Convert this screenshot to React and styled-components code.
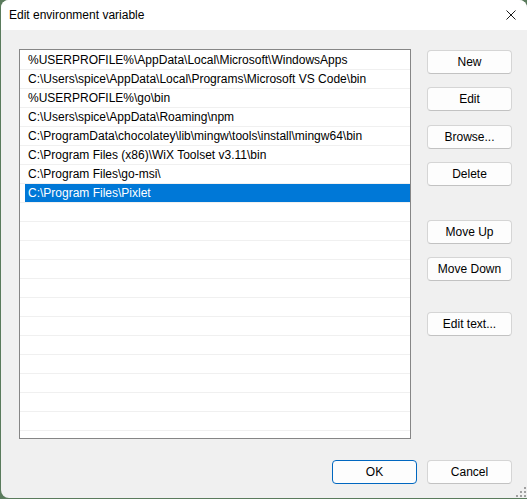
import styled, { createGlobalStyle } from 'styled-components';

const GlobalStyle = createGlobalStyle`
  html, body {
    margin: 0;
    padding: 0;
    background: #5a7b5c;
  }

  body {
    font-family: 'Liberation Sans', Arial, sans-serif;
    font-size: 12px;
    color: #000;
  }
`;

const Window = styled.div`
  position: relative;
  margin-left: 1px;
  width: 526px;
  height: 498px;
  display: flex;
  flex-direction: column;
  background: #f0f0f0;
  border-radius: 8px 8px 0 8px;
  overflow: hidden;
`;

const TitleBar = styled.div`
  height: 30px;
  flex: 0 0 30px;
  display: flex;
  align-items: center;
  justify-content: space-between;
  background: #ffffff;
  padding: 0 11px 0 8px;
  box-sizing: border-box;
`;

const Title = styled.span`
  font-size: 12px;
  margin-top: -1px;
`;

const CloseIcon = styled.svg`
  width: 10px;
  height: 10px;
  margin-top: -1px;
`;

const Body = styled.div`
  flex: 1;
  display: flex;
  flex-direction: column;
  padding: 19px 15px 0 18px;
`;

const MainRow = styled.div`
  display: flex;
  gap: 16px;
`;

const ListBox = styled.div`
  width: 390px;
  height: 388px;
  border: 1px solid #868686;
  background: #ffffff;
  overflow: hidden;
`;

const Row = styled.div`
  height: 19px;
  box-sizing: border-box;
  border-top: 1px solid ${({ $first }) => ($first ? 'transparent' : '#f0f0f0')};
  display: flex;
`;

const RowLabel = styled.div`
  flex: 1;
  display: flex;
  align-items: center;
  margin-left: ${({ $selected }) => ($selected ? '5px' : '0')};
  padding-left: ${({ $selected }) => ($selected ? '3px' : '8px')};
  background: ${({ $selected }) => ($selected ? '#0078d7' : 'transparent')};
  color: ${({ $selected }) => ($selected ? '#ffffff' : '#000000')};
  white-space: nowrap;
  line-height: 18px;
`;

const ButtonColumn = styled.div`
  display: flex;
  flex-direction: column;
  padding-top: 1px;
`;

const Button = styled.button`
  width: 85px;
  height: 24px;
  margin-top: ${({ $gap }) => $gap || 0}px;
  padding: 0;
  box-sizing: border-box;
  font-family: inherit;
  font-size: 12px;
  color: #000;
  background: #fdfdfd;
  border: 1px solid ${({ $primary }) => ($primary ? '#0067c0' : '#d5d5d5')};
  border-bottom-color: ${({ $primary }) => ($primary ? '#0067c0' : '#c2c2c2')};
  border-radius: 4px;
`;

const Footer = styled.div`
  display: flex;
  justify-content: flex-end;
  gap: 10px;
  margin-top: 21px;
`;

const Grip = styled.svg`
  position: absolute;
  right: 1px;
  bottom: 1px;
  width: 10px;
  height: 10px;
`;

const entries = [
  '%USERPROFILE%\\AppData\\Local\\Microsoft\\WindowsApps',
  'C:\\Users\\spice\\AppData\\Local\\Programs\\Microsoft VS Code\\bin',
  '%USERPROFILE%\\go\\bin',
  'C:\\Users\\spice\\AppData\\Roaming\\npm',
  'C:\\ProgramData\\chocolatey\\lib\\mingw\\tools\\install\\mingw64\\bin',
  'C:\\Program Files (x86)\\WiX Toolset v3.11\\bin',
  'C:\\Program Files\\go-msi\\',
  'C:\\Program Files\\Pixlet',
];

const SELECTED = 7;
const ROW_COUNT = 21;

const sideButtons = [
  { label: 'New', gap: 0 },
  { label: 'Edit', gap: 13 },
  { label: 'Browse...', gap: 14 },
  { label: 'Delete', gap: 13 },
  { label: 'Move Up', gap: 34 },
  { label: 'Move Down', gap: 13 },
  { label: 'Edit text...', gap: 31 },
];

function App() {
  const rows = Array.from({ length: ROW_COUNT }, (_, i) => entries[i] || '');

  return (
    <>
      <GlobalStyle />
      <Window>
        <TitleBar>
          <Title>Edit environment variable</Title>
          <CloseIcon viewBox="0 0 10 10">
            <path d="M0.5 0.5 L9.5 9.5 M9.5 0.5 L0.5 9.5" stroke="#1a1a1a" strokeWidth="1" fill="none" />
          </CloseIcon>
        </TitleBar>
        <Body>
          <MainRow>
            <ListBox>
              {rows.map((text, i) => (
                <Row key={i} $first={i === 0}>
                  <RowLabel $selected={i === SELECTED}>{text}</RowLabel>
                </Row>
              ))}
            </ListBox>
            <ButtonColumn>
              {sideButtons.map(btn => (
                <Button key={btn.label} $gap={btn.gap}>{btn.label}</Button>
              ))}
            </ButtonColumn>
          </MainRow>
          <Footer>
            <Button $primary>OK</Button>
            <Button>Cancel</Button>
          </Footer>
        </Body>
        <Grip viewBox="0 0 10 10">
          <rect x="8" y="0" width="2" height="2" fill="#a0a0a0" />
          <rect x="4" y="4" width="2" height="2" fill="#a0a0a0" />
          <rect x="8" y="4" width="2" height="2" fill="#a0a0a0" />
          <rect x="0" y="8" width="2" height="2" fill="#a0a0a0" />
          <rect x="4" y="8" width="2" height="2" fill="#a0a0a0" />
          <rect x="8" y="8" width="2" height="2" fill="#a0a0a0" />
        </Grip>
      </Window>
    </>
  );
}

export default App;
